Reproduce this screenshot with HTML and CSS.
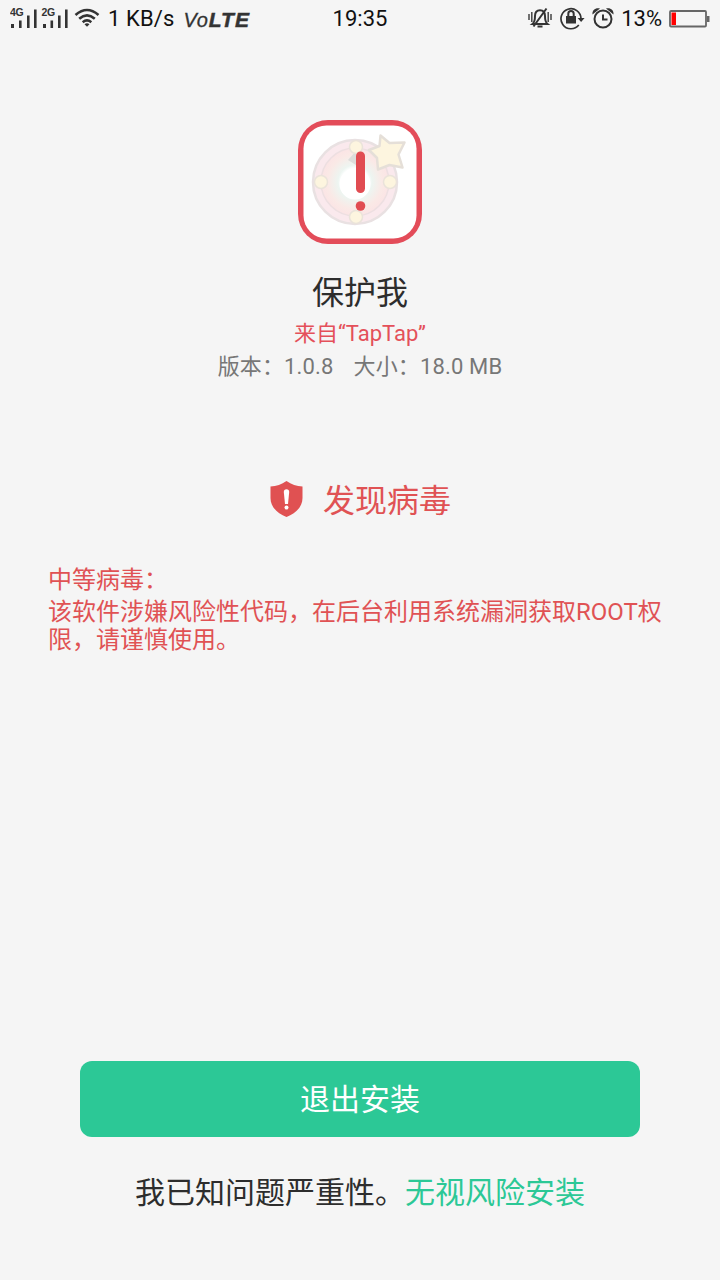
FILE: index.html
```html
<!DOCTYPE html>
<html lang="zh-CN">
<head>
  <meta charset="UTF-8">
  <title>保护我</title>
  <link rel="stylesheet" href="styles.css">
</head>
<body>

<!-- Status bar -->
<header class="status-bar">
  <div class="status-left">
    <svg class="signal" width="60" height="24" viewBox="0 0 60 24">
      <text x="0" y="11">4G</text>
      <path d="M1 19h3v4H1zM9 15.500h2.600V23H9zM17 10.500h2.600V23H17zM24 4.500h2.600V23H24z"/>
      <text x="31.500" y="11">2G</text>
      <path d="M33 19h3v4h-3zM40.500 15.500h2.600V23h-2.600zM48 10.500h2.600V23H48zM55 4.500h2.600V23H55z"/>
    </svg>
    <svg class="wifi" width="26" height="20" viewBox="0 0 26 20">
      <path class="stroke" d="M1.500 7Q13-3 24.500 7M5.200 10.700Q13 4 20.800 10.700M8.700 14.200Q13 10.600 17.300 14.200"/>
      <path d="M10.500 16.300Q13 14.300 15.500 16.300L13 18.800z"/>
    </svg>
    <span class="speed">1 KB/s</span>
    <span class="volte">Vo<b>LTE</b></span>
  </div>
  <div class="status-time">19:35</div>
  <div class="status-right">
    <svg class="mute" width="24" height="22" viewBox="0 0 24 22">
      <path class="thin" d="M1 7v6M3.800 5v10M20.200 5v10M23 7v6"/>
      <path class="stroke" d="M4.500 17C7 15 7 12 7 9c0-4 2.200-5.800 5-5.800s5 1.800 5 5.800c0 3 0 6 2.500 8zM5.500 19.500L18.500 1.500M9.500 19.500h5"/>
    </svg>
    <svg class="rotate" width="25" height="24" viewBox="0 0 25 24">
      <path class="ring" d="M18.800 19A10 10 0 1 1 21 12.500"/>
      <path class="stroke" d="M8.300 10V7.800a2.700 2.700 0 0 1 5.400 0V10"/>
      <path d="M6 10h10v7.500H6zM17.600 12h7L21.100 16z"/>
    </svg>
    <svg class="alarm" width="22" height="22" viewBox="0 0 22 22">
      <circle class="stroke" cx="11" cy="12" r="8.500"/>
      <path class="stroke" d="M11 7.500V12.500H15.500"/>
      <path d="M.500 7.500C0 3 3.500.500 8 1.500zM21.500 7.500C22 3 18.500.500 14 1.500z"/>
    </svg>
    <span class="percent">13%</span>
    <svg class="battery" width="41" height="18" viewBox="0 0 41 18">
      <rect class="case" x="1" y="1" width="36" height="15.500" rx="1"/>
      <path class="cap" d="M38 6h2.500v6H38z"/>
      <path class="level" d="M2.500 2.500h4.500v12.500H2.500z"/>
    </svg>
  </div>
</header>

<!-- App info -->
<section class="app-info">
  <svg class="app-icon" width="124" height="124" viewBox="0 0 124 124">
    <defs>
      <radialGradient id="wheel">
        <stop offset="0.400" stop-color="#fff"/>
        <stop offset="0.500" stop-color="#edf5f1"/>
        <stop offset="0.800" stop-color="#fae9e6"/>
        <stop offset="1" stop-color="#fbe4e5"/>
      </radialGradient>
    </defs>
    <rect width="124" height="124" rx="30" fill="#e34c59"/>
    <rect x="5.500" y="5.500" width="113" height="113" rx="23" fill="#fff"/>
    <circle cx="57" cy="62" r="42" fill="#fae9ed" stroke="#e9e1e2" stroke-width="2.500"/>
    <circle cx="57" cy="62" r="34" fill="url(#wheel)" stroke="#eddfe1" stroke-width="1.500"/>
    <path d="M50 40l8-9v14z" fill="#dcdcda"/>
    <circle cx="57" cy="64" r="15.500" fill="#fff"/>
    <g fill="#fdf5df" stroke="#eae3da" stroke-width="1.500">
      <circle cx="58" cy="27" r="6.500"/>
      <circle cx="23" cy="62" r="6.500"/>
      <circle cx="92" cy="62" r="6.500"/>
      <circle cx="58" cy="97" r="6.500"/>
      <path d="M82.500 15.500l9 7.500 15-.500-6 12 4 13-13-2.500-11.500 4.500-1-11.500-8-8 10.500-4z" stroke="#e5dfd8" stroke-width="2.500" stroke-linejoin="round"/>
    </g>
    <rect x="58" y="31.500" width="9" height="41.500" rx="4.500" fill="#e14c52"/>
    <circle cx="62.500" cy="86" r="4.800" fill="#e14c52"/>
  </svg>
  <h1 class="app-name">保护我</h1>
  <p class="app-source">来自“TapTap”</p>
  <p class="app-meta"><span>版本：1.0.8</span><span>大小：18.0 MB</span></p>
</section>

<!-- Scan result -->
<section class="result">
  <h2 class="result-title">
    <svg class="shield" width="34" height="38" viewBox="0 0 34 38">
      <path d="M17.500 1C12.500 4.500 7.500 6 1.500 6.500V18C1.500 27 8.500 33.500 17.500 37C26.500 33.500 33.500 27 33.500 18V6.500C27.500 6 22.500 4.500 17.500 1z" fill="#e05152"/>
      <path d="M14.800 12a2.700 2.700 0 0 1 5.400 0l-1.200 12h-3z" fill="#fff"/>
      <circle cx="17.500" cy="27.500" r="2" fill="#fff"/>
    </svg>
    <span>发现病毒</span>
  </h2>
  <p class="result-level">中等病毒：</p>
  <p class="result-text">该软件涉嫌风险性代码，在后台利用系统漏洞获取ROOT权限，请谨慎使用。</p>
</section>

<!-- Actions -->
<footer class="actions">
  <button class="exit-btn">退出安装</button>
  <p class="ignore">我已知问题严重性。<a class="ignore-link">无视风险安装</a></p>
</footer>

</body>
</html>
```
FILE: styles.css
```css
* {
  box-sizing: border-box;
}

body {
  display: flex;
  flex-direction: column;
  height: 1280px;
  margin: 0;
  background: #f5f5f5;
  color: #2d2d2d;
  font-family: Roboto, "Noto Sans CJK SC", sans-serif;
}

h1, h2, p {
  margin: 0;
  font-weight: 400;
}

svg {
  display: block;
  flex: none;
}

.status-bar {
  display: grid;
  grid-template-columns: 1fr auto 1fr;
  align-items: center;
  height: 38px;
  padding: 0 10px;
  color: #111;
  font-size: 22px;
  line-height: 38px;
}

.status-bar svg {
  fill: #333;
}

.status-bar .stroke {
  fill: none;
  stroke: #333;
  stroke-width: 2;
}

.status-bar .thin {
  fill: none;
  stroke: #444;
  stroke-width: 1.5;
}

.status-bar .ring {
  fill: none;
  stroke: #333;
  stroke-width: 1.7;
}

.status-left,
.status-right {
  display: flex;
  align-items: center;
}

.status-right {
  justify-content: flex-end;
}

.signal {
  margin-top: -4px;
}

.signal text {
  font: bold 10.5px "Liberation Sans", sans-serif;
  letter-spacing: -0.4px;
}

.wifi {
  margin: -2px 0 0 4px;
}

.wifi .stroke {
  stroke-width: 2.6;
}

.speed {
  margin-left: 8px;
  letter-spacing: 0.1px;
}

.volte {
  margin: 2px 0 0 9px;
  color: #333;
  font: italic 20px/32px "Liberation Sans", sans-serif;
  letter-spacing: 0.8px;
  -webkit-text-stroke: 0.3px #333;
}

.volte b {
  font-size: 21px;
  letter-spacing: 1.1px;
  -webkit-text-stroke: 0.5px #333;
}

.mute {
  margin-top: -2px;
}

.rotate {
  margin: -3px 0 0 8px;
}

.alarm {
  margin: -2px 0 0 7px;
}

.percent {
  margin: 0 7px 0 7px;
}

.battery {
  margin-top: -1px;
}

.battery .case {
  fill: none;
  stroke: #666;
  stroke-width: 1.8;
}

.battery .cap {
  fill: #666;
}

.battery .level {
  fill: #f00;
}

.app-info {
  display: flex;
  flex-direction: column;
  align-items: center;
  padding-top: 82px;
}

.app-name {
  margin-top: 27px;
  font-size: 32px;
  line-height: 44px;
}

.app-source {
  margin-top: 2px;
  color: #e4505a;
  font-size: 22px;
  line-height: 34px;
}

.app-meta {
  display: flex;
  gap: 20px;
  color: #777;
  font-size: 22px;
  letter-spacing: 0.15px;
  line-height: 32px;
}

.result {
  padding: 96px 48px 0;
  color: #e05254;
}

.result-title {
  display: flex;
  align-items: center;
  justify-content: center;
  gap: 20px;
  font-size: 32px;
  line-height: 44px;
}

.shield {
  margin-top: -4px;
}

.result-level {
  margin-top: 41px;
  font-size: 24px;
  line-height: 32px;
}

.result-text {
  margin-top: 2px;
  font-size: 24px;
  line-height: 28px;
}

.actions {
  margin-top: auto;
  padding: 0 80px 65px;
  text-align: center;
}

.exit-btn {
  display: block;
  width: 100%;
  height: 76px;
  padding: 2px 0 0;
  border: none;
  border-radius: 12px;
  background: #2cc896;
  color: #fff;
  font: 30px/74px Roboto, "Noto Sans CJK SC", sans-serif;
}

.ignore {
  margin-top: 34px;
  font-size: 30px;
  line-height: 44px;
}

.ignore-link {
  color: #2cc896;
}
```
